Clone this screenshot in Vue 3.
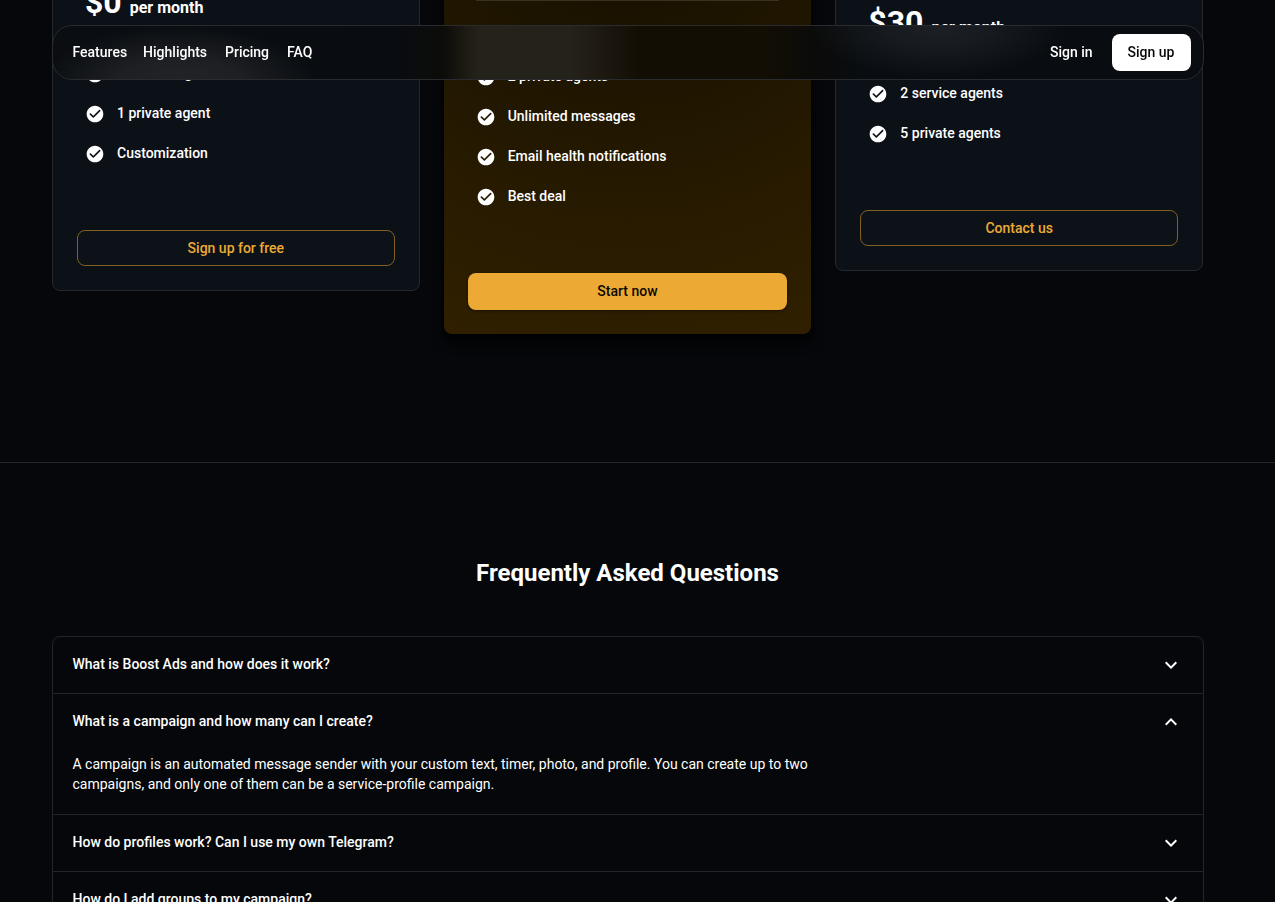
<script setup>
import { ref } from 'vue'

const links = ['Features', 'Highlights', 'Pricing', 'FAQ']

const tiers = [
  {
    title: 'Free',
    price: 0,
    features: ['1 service agent', '1 private agent', 'Customization'],
    button: 'Sign up for free'
  },
  {
    title: 'Professional',
    price: 15,
    features: ['1 service agent', '2 private agents', 'Unlimited messages', 'Email health notifications', 'Best deal'],
    button: 'Start now',
    featured: true
  },
  {
    title: 'Enterprise',
    price: 30,
    features: ['2 service agents', '5 private agents'],
    button: 'Contact us'
  }
]

const faqs = [
  { question: 'What is Boost Ads and how does it work?' },
  {
    question: 'What is a campaign and how many can I create?',
    answer: 'A campaign is an automated message sender with your custom text, timer, photo, and profile. You can create up to two campaigns, and only one of them can be a service-profile campaign.'
  },
  { question: 'How do profiles work? Can I use my own Telegram?' },
  { question: 'How do I add groups to my campaign?' }
]

const open = ref(1)

function toggle(i) {
  open.value = open.value === i ? -1 : i
}
</script>

<template>
  <div class="page">
    <header class="navbar">
      <nav class="nav-links">
        <a v-for="link in links" :key="link" class="nav-link" href="#">{{ link }}</a>
      </nav>
      <div class="nav-actions">
        <button class="btn btn-text">Sign in</button>
        <button class="btn btn-white">Sign up</button>
      </div>
    </header>

    <!-- PRICING -->
    <section class="pricing">
      <div class="container tiers">
        <article v-for="tier in tiers" :key="tier.title" class="card" :class="{ featured: tier.featured }">
          <div class="card-content">
            <h3 class="card-title">{{ tier.title }}</h3>
            <div class="price-row">
              <span class="price">${{ tier.price }}</span>
              <span class="per">per month</span>
            </div>
            <hr class="card-divider" />
            <ul class="features">
              <li v-for="f in tier.features" :key="f" class="feature">
                <svg class="check" viewBox="0 0 24 24">
                  <path d="M12 2C6.48 2 2 6.48 2 12s4.48 10 10 10 10-4.48 10-10S17.52 2 12 2zM9.29 16.29 5.7 12.7a.996.996 0 0 1 0-1.41c.39-.39 1.02-.39 1.41 0L10 14.17l6.88-6.88c.39-.39 1.02-.39 1.41 0 .39.39.39 1.02 0 1.41l-7.59 7.59c-.38.39-1.02.39-1.41 0z" />
                </svg>
                <span class="label">{{ f }}</span>
              </li>
            </ul>
          </div>
          <button class="btn" :class="tier.featured ? 'btn-gold' : 'btn-outline'">{{ tier.button }}</button>
        </article>
      </div>
    </section>

    <hr class="section-divider" />

    <!-- FAQ -->
    <section class="faq">
      <h2 class="faq-title">Frequently Asked Questions</h2>
      <div class="container accordion">
        <div v-for="(item, i) in faqs" :key="i" class="accordion-item">
          <button class="summary" :aria-expanded="open === i" @click="toggle(i)">
            <span class="label">{{ item.question }}</span>
            <svg class="chevron" :class="{ up: open === i }" viewBox="0 0 24 24">
              <path d="M16.59 8.59 12 13.17 7.41 8.59 6 10l6 6 6-6z" />
            </svg>
          </button>
          <div v-if="item.answer && open === i" class="details">
            <p class="answer">{{ item.answer }}</p>
          </div>
        </div>
      </div>
    </section>
  </div>
</template>

<style>
body {
  margin: 0;
  background: #05070a;
}
</style>

<style scoped>
.page {
  height: 100vh;
  overflow: hidden;
  background: #05070a;
  color: #fff;
  font-family: Roboto, "Liberation Sans", sans-serif;
  font-size: 14px;
  line-height: 20px;
}

.page * {
  box-sizing: border-box;
}

.container {
  width: 100%;
  max-width: 1152px;
  margin: 0 auto;
}

/* keeps the text a bit above the icon's middle */
.label {
  padding-bottom: 2px;
}

.navbar {
  position: fixed;
  z-index: 10;
  top: 25px;
  left: 0;
  right: 20px;
  max-width: 1152px;
  margin: 0 auto;
  display: flex;
  align-items: center;
  justify-content: space-between;
  padding: 8px 12px;
  border: 1px solid #292b2e;
  border-radius: 20px;
  background:
    radial-gradient(ellipse 12% 110% at 11% 110%, #222428 0%, rgba(34, 36, 40, 0.8) 45%, rgba(34, 36, 40, 0) 100%),
    radial-gradient(ellipse 11% 100% at 77% 0%, #1c1f23 0%, rgba(28, 31, 35, 0.75) 40%, rgba(28, 31, 35, 0) 100%),
    linear-gradient(90deg, rgba(37, 34, 27, 0) 34%, #25221b 37%, #25221b 45%, rgba(37, 34, 27, 0) 51%),
    linear-gradient(90deg, #0a0d11 0%, #090c10 30%, #0c0c09 34%, #130e04 38%, #130e04 62%, #0b0b09 66%, #090c10 70%, #090c10 100%);
}

.nav-links {
  display: flex;
}

.nav-link {
  min-width: 64px;
  padding: 0 8px 2px;
  color: #fff;
  font-weight: 500;
  text-align: center;
  text-decoration: none;
}

.nav-link:last-child {
  min-width: 0;
}

.nav-actions {
  display: flex;
  gap: 4px;
}

.btn {
  height: 36px;
  padding: 0 15px;
  border: 1px solid transparent;
  border-radius: 8px;
  font-family: inherit;
  font-size: 14px;
  font-weight: 500;
  line-height: 20px;
  cursor: pointer;
}

.btn-text {
  padding: 0 14px;
  background: none;
  color: #fff;
}

.btn-white {
  height: 37px;
  padding-bottom: 2px;
  background: #fff;
  color: #05070a;
}

.btn-outline {
  background: #0d1218;
  border-color: #845f22;
  color: #ecaa35;
}

.btn-gold {
  height: 37px;
  padding-bottom: 2px;
  background: #ecaa35;
  color: #0b0800;
  box-shadow: 0 1px 3px rgba(0, 0, 0, 0.5);
}

/* PRICING */
.pricing {
  display: flex;
  flex-direction: column;
  justify-content: flex-end;
  height: 462px;
  padding: 0 20px 128px 0;
}

.tiers {
  display: grid;
  grid-template-columns: repeat(3, 1fr);
  gap: 24px;
  align-items: center;
  max-width: 1151px;
}

.card {
  display: flex;
  flex-direction: column;
  gap: 32px;
  padding: 24px;
  border: 1px solid #25282d;
  border-radius: 8px;
  background: #0c1017;
}

.featured {
  border: none;
  background: radial-gradient(circle at 50% 0%, #130e00, #302000);
  box-shadow: 0 8px 12px #010203;
}

.card-content {
  padding: 0 8px 24px;
}

.card-title {
  margin: 0 0 8px;
  font-size: 20px;
  font-weight: 500;
  line-height: 24px;
}

.featured .card-title {
  line-height: 32px;
}

.price-row {
  display: flex;
  align-items: baseline;
  gap: 8px;
}

.price {
  font-size: 32px;
  font-weight: 700;
  line-height: 38px;
}

.per {
  font-size: 16px;
  font-weight: 700;
}

.card-divider {
  height: 1px;
  margin: 16px 0;
  border: none;
  background: #25282d;
}

.featured .card-divider {
  background: #383020;
}

.features {
  margin: 0;
  padding: 0;
  list-style: none;
}

.feature {
  display: flex;
  align-items: center;
  gap: 12px;
  height: 40px;
  font-weight: 500;
}

.check {
  width: 20px;
  height: 20px;
  fill: #fff;
}

/* FAQ */
.section-divider {
  height: 1px;
  margin: 0;
  border: none;
  background: #24262a;
}

.faq {
  padding: 96px 20px 96px 0;
}

.faq-title {
  margin: 0 0 49px;
  font-size: 24px;
  font-weight: 700;
  line-height: 28px;
  text-align: center;
}

.accordion {
  border: 1px solid #222428;
  border-radius: 8px;
}

.accordion-item + .accordion-item {
  border-top: 1px solid #222428;
}

.summary {
  display: flex;
  align-items: center;
  justify-content: space-between;
  width: 100%;
  height: 56px;
  padding: 0 20px;
  border: none;
  background: none;
  color: #fff;
  font-family: inherit;
  font-size: 14px;
  font-weight: 500;
  line-height: 20px;
  text-align: left;
  cursor: pointer;
}

.chevron {
  width: 24px;
  height: 24px;
  fill: #fff;
}

.up {
  transform: rotate(180deg);
}

.details {
  padding: 4px 20px 20px;
}

.answer {
  max-width: 70%;
  margin: 0;
}
</style>
